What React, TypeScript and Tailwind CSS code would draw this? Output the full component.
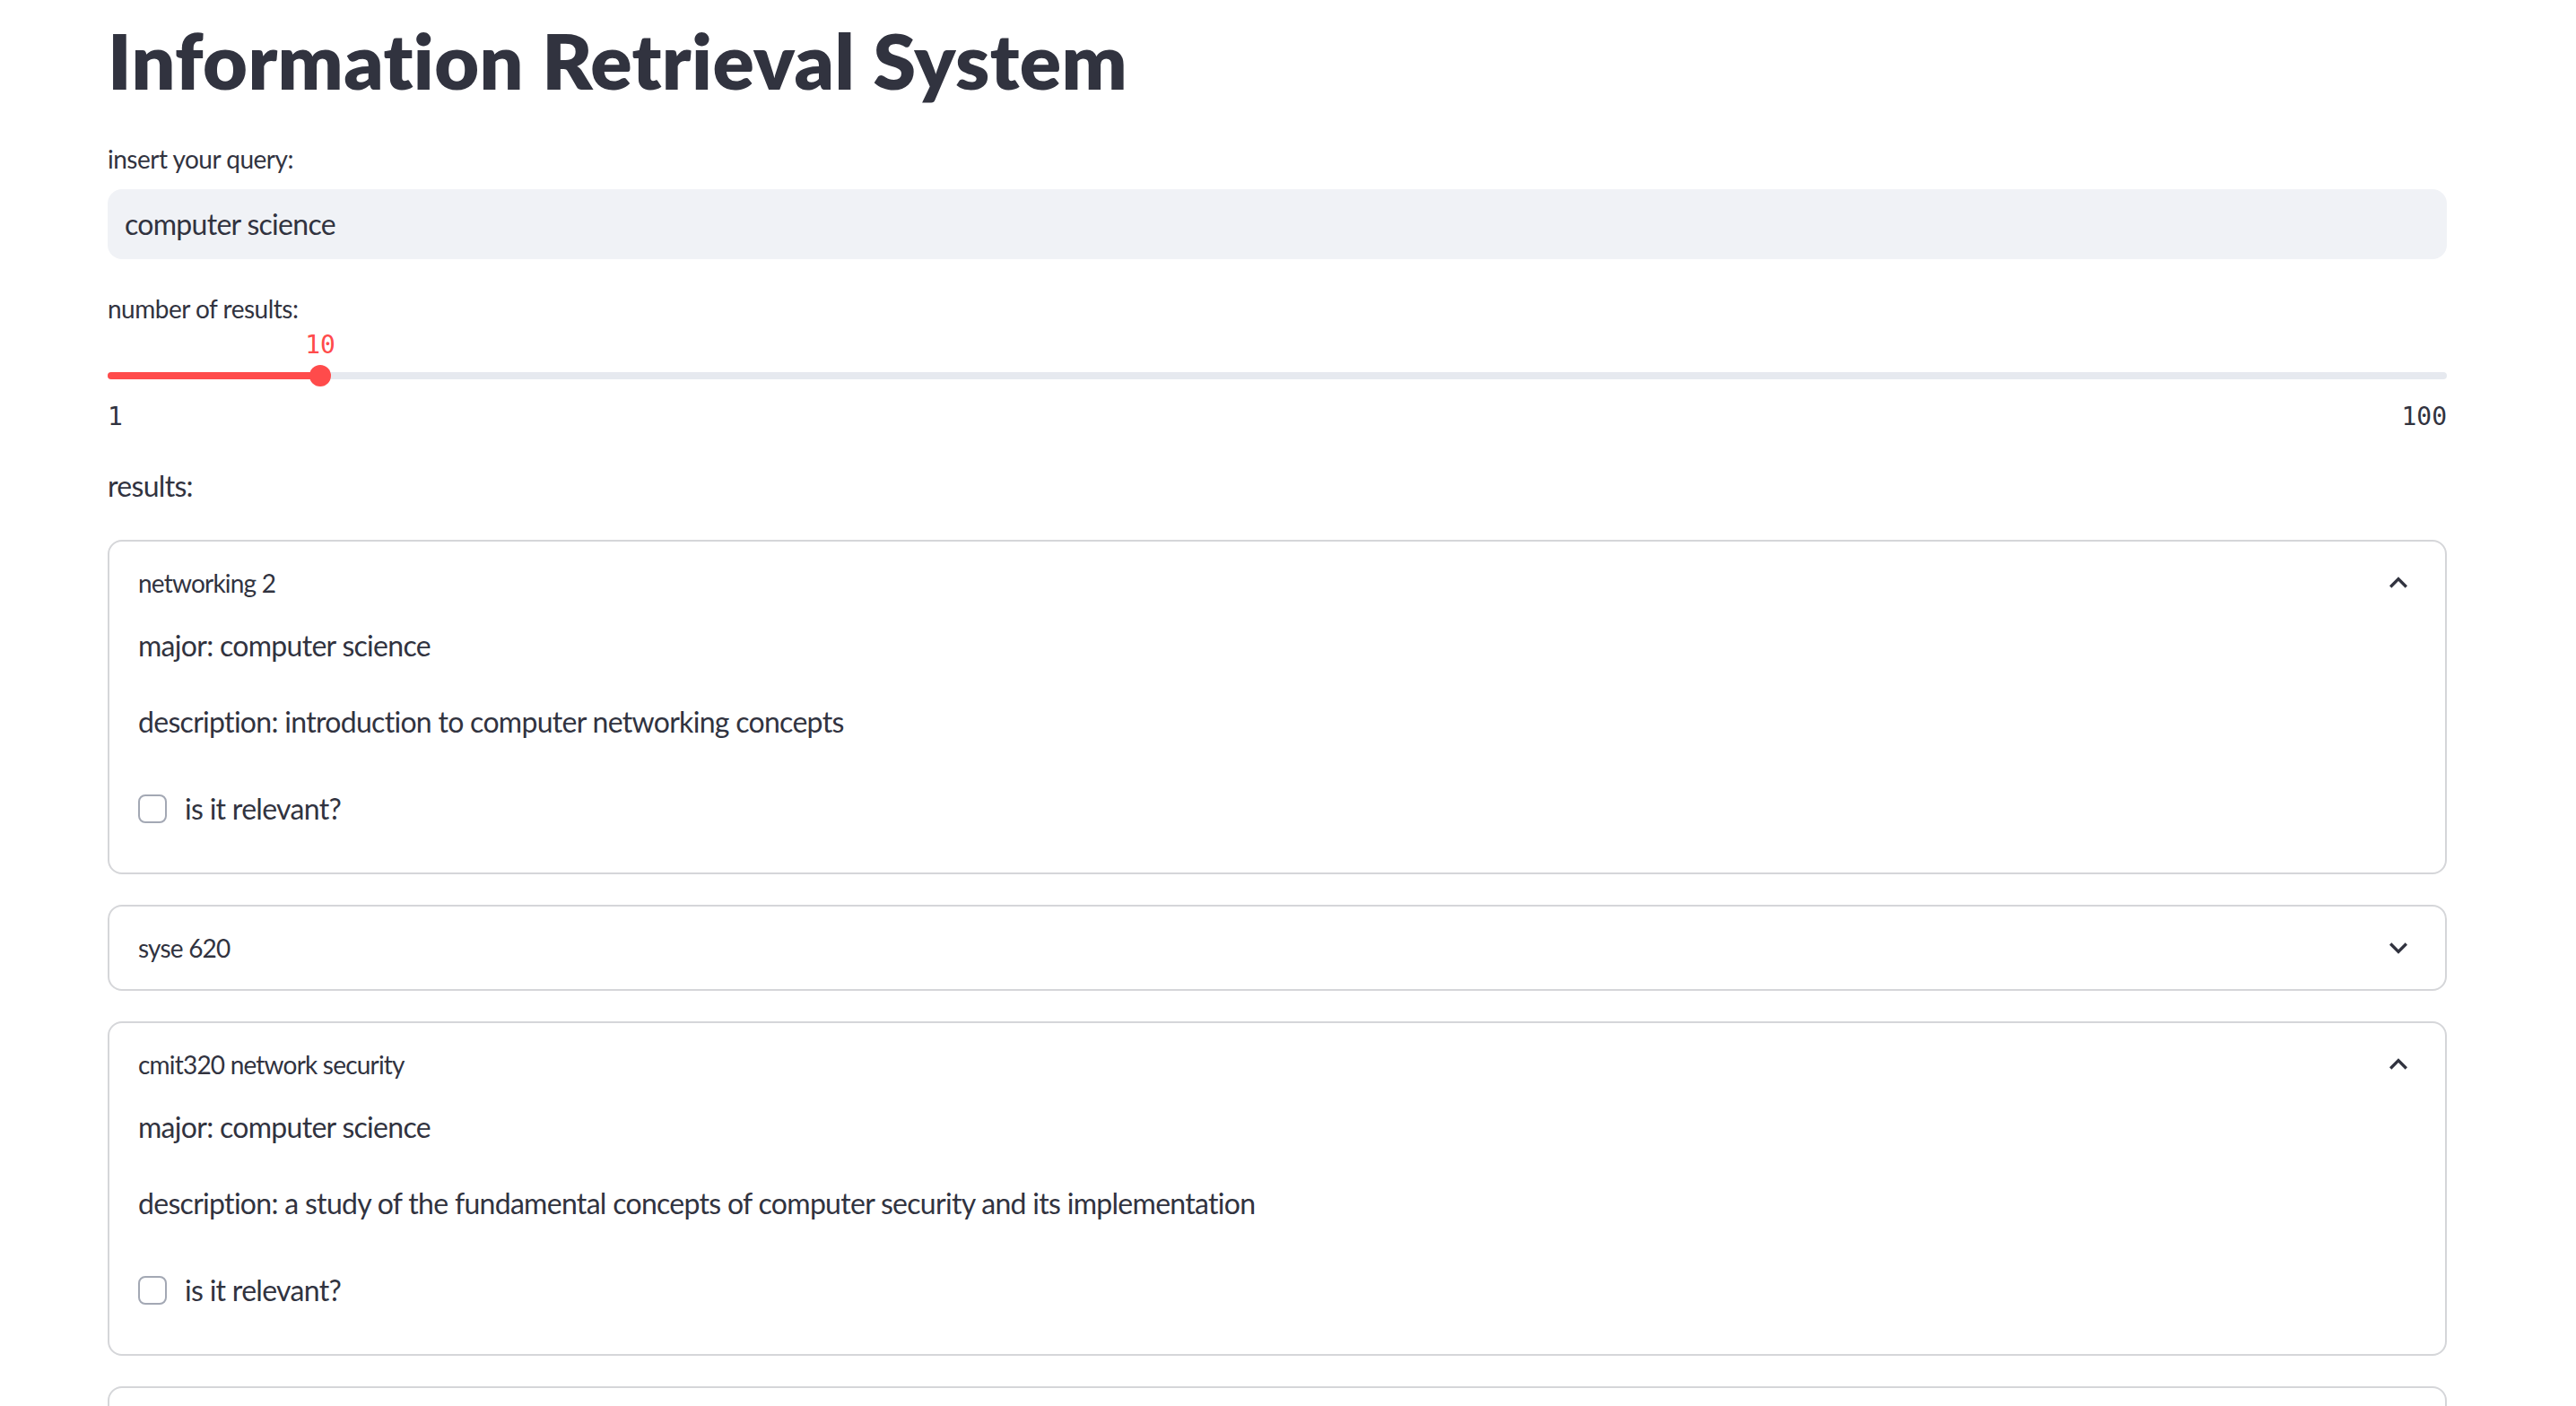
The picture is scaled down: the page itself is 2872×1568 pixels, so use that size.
const sans = "font-['Lato','Noto_Sans',sans-serif]";

type Result = {
  title: string;
  major?: string;
  description?: string;
  open: boolean;
};

const results: Result[] = [
  {
    title: "networking 2",
    major: "computer science",
    description: "introduction to computer networking concepts",
    open: true,
  },
  { title: "syse 620", open: false },
  {
    title: "cmit320 network security",
    major: "computer science",
    description: "a study of the fundamental concepts of computer security and its implementation",
    open: true,
  },
  { title: "it 341", open: false },
];

const Chevron = ({ up }: { up: boolean }) => (
  <svg width="40" height="40" viewBox="0 0 24 24" className="fill-[#31333f]">
    {up ? (
      <path d="M12 8l-6 6 1.41 1.41L12 10.83l4.59 4.58L18 14z" />
    ) : (
      <path d="M16.59 8.59L12 13.17 7.41 8.59 6 10l6 6 6-6z" />
    )}
  </svg>
);

const Expander = ({ item }: { item: Result }) => {
  return (
    <div className="mt-[34px] rounded-[16px] border-2 border-[#d5d6d9] bg-white first:mt-[36px]">
      <div className="flex h-[92px] items-center justify-between px-[32px]">
        <span className="text-[28px] leading-[40px] tracking-[-0.8px]">{item.title}</span>
        <Chevron up={item.open} />
      </div>
      {item.open && (
        <div className="px-[32px] pb-[47px] text-[32px] leading-[48px] tracking-[-0.7px]">
          <p>major: {item.major}</p>
          <p className="mt-[37px]">description: {item.description}</p>
          <label className="mt-[49px] flex h-[48px] items-center gap-[20px]">
            <span className="h-[32px] w-[32px] rounded-[8px] border-2 border-[#a3a8b4] bg-white" />
            <span>is it relevant?</span>
          </label>
        </div>
      )}
    </div>
  );
};

export default function App() {
  const value = 10;
  const pct = ((value - 1) / 99) * 100;

  return (
    <div className={`${sans} h-[1568px] overflow-hidden bg-white pl-[120px] pr-[144px] text-[#31333f]`}>
      <h1 className="pt-[14px] text-[86px] font-extrabold leading-[106px] tracking-[0.4px]">
        Information Retrieval System
      </h1>

      <div className="mt-[37px] text-[28px] leading-[40px] tracking-[-0.5px]">insert your query:</div>
      <div className="mt-[14px] flex h-[78px] items-center rounded-[16px] bg-[#f0f2f6] px-[19px]">
        <span className="text-[32px] tracking-[-0.7px]">computer science</span>
      </div>

      <div className="mt-[35px] text-[28px] leading-[40px] tracking-[-0.5px]">number of results:</div>
      <div className="relative mt-[1px] h-[40px] font-['DejaVu_Sans_Mono',monospace] text-[28px] leading-[40px] text-[#ff4b4b]">
        <span className="absolute -translate-x-1/2" style={{ left: `${pct}%` }}>
          {value}
        </span>
      </div>
      <div className="relative mt-[2px] flex h-[24px] items-center">
        <div className="h-[8px] w-full rounded-full bg-[#e6e9ef]" />
        <div className="absolute left-0 h-[8px] rounded-full bg-[#ff4b4b]" style={{ width: `${pct}%` }} />
        <div
          className="absolute h-[24px] w-[24px] -translate-x-1/2 rounded-full bg-[#ff4b4b]"
          style={{ left: `${pct}%` }}
        />
      </div>
      <div className="mt-[14px] flex justify-between font-['DejaVu_Sans_Mono',monospace] text-[28px] leading-[40px]">
        <span>1</span>
        <span>100</span>
      </div>

      <div className="mt-[33px] text-[32px] leading-[48px] tracking-[-0.7px]">results:</div>

      <div className="flex flex-col">
        {results.map((r) => (
          <Expander key={r.title} item={r} />
        ))}
      </div>
    </div>
  );
}
